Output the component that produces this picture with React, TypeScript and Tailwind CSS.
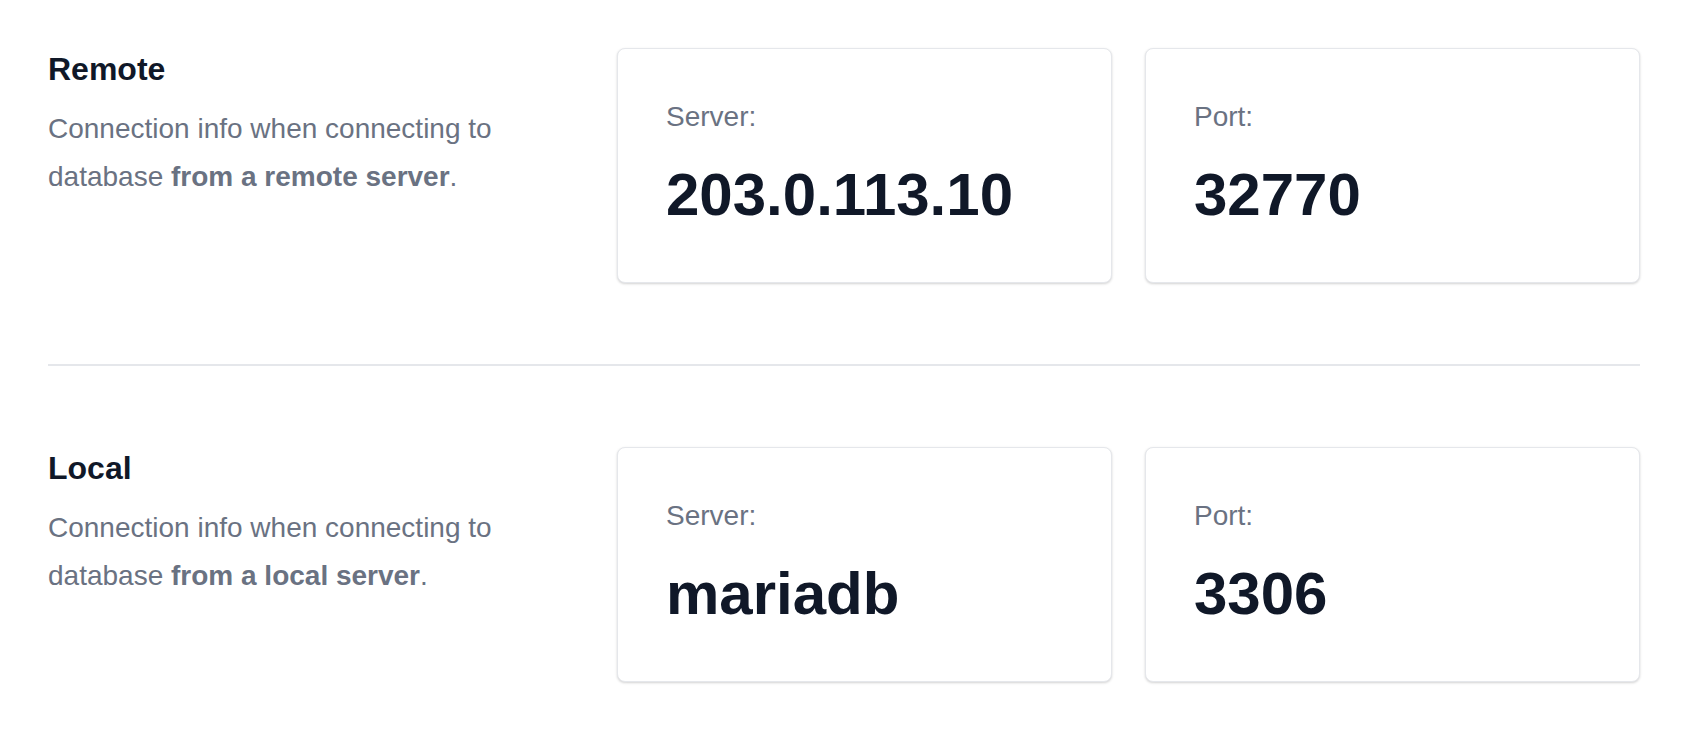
import React from 'react';

type Section = {
  title: string;
  where: string;
  server: string;
  port: string;
};

const sections: Section[] = [
  { title: 'Remote', where: 'from a remote server', server: '203.0.113.10', port: '32770' },
  { title: 'Local', where: 'from a local server', server: 'mariadb', port: '3306' },
];

const InfoCard = ({ label, value }: { label: string; value: string }) => (
  <div className="bg-white border border-gray-200 rounded-lg shadow-[0_1px_3px_rgba(0,0,0,0.12),0_1px_2px_rgba(0,0,0,0.06)] p-12">
    <div className="text-[28px] leading-[40px] text-gray-500">{label}</div>
    <div className="mt-[19px] text-[60px] leading-[78px] font-bold text-gray-900">{value}</div>
  </div>
);

const App = () => {
  return (
    <div className="min-h-screen bg-white px-12 pt-12 pb-[50px] font-['Liberation_Sans',Arial,sans-serif]">
      {sections.map((section, i) => (
        <React.Fragment key={section.title}>
          {i > 0 && <div className="my-[81px] h-[2px] bg-gray-200" />}
          <div className="grid grid-cols-[535px_1fr] gap-[34px]">
            <div>
              <h2 className="mt-[1px] text-[32px] leading-[40px] font-bold text-gray-900">{section.title}</h2>
              <p className="mt-[16px] text-[28px] leading-[48px] text-gray-500">
                Connection info when connecting to database{' '}
                <span className="font-bold">{section.where}</span>.
              </p>
            </div>
            <div className="grid grid-cols-2 gap-[33px]">
              <InfoCard label="Server:" value={section.server} />
              <InfoCard label="Port:" value={section.port} />
            </div>
          </div>
        </React.Fragment>
      ))}
    </div>
  );
};

export default App;
